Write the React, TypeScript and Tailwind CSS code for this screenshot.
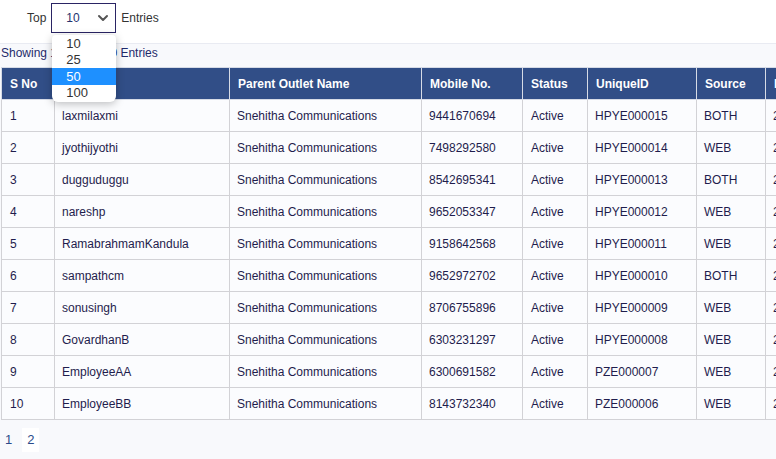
import React from "react";

const rows = [
  ["1", "laxmilaxmi", "9441670694", "HPYE000015", "BOTH"],
  ["2", "jyothijyothi", "7498292580", "HPYE000014", "WEB"],
  ["3", "dugguduggu", "8542695341", "HPYE000013", "BOTH"],
  ["4", "nareshp", "9652053347", "HPYE000012", "WEB"],
  ["5", "RamabrahmamKandula", "9158642568", "HPYE000011", "WEB"],
  ["6", "sampathcm", "9652972702", "HPYE000010", "BOTH"],
  ["7", "sonusingh", "8706755896", "HPYE000009", "WEB"],
  ["8", "GovardhanB", "6303231297", "HPYE000008", "WEB"],
  ["9", "EmployeeAA", "6300691582", "PZE000007", "WEB"],
  ["10", "EmployeeBB", "8143732340", "PZE000006", "WEB"],
];

const widths = [53, 175, 192, 101, 65, 109, 69, 120];
const headers = ["S No", "Name", "Parent Outlet Name", "Mobile No.", "Status", "UniqueID", "Source", "Date"];

export default function App() {
  return (
    <div className="w-[776px] h-[459px] bg-[#f8f9fc] overflow-hidden relative font-['Liberation_Sans',Arial,sans-serif] text-[12px] text-[#1f1d4d]">
      <div className="h-[44px] bg-white border-b border-[#e9ebf2] flex items-start pt-[3px] pl-[27px]">
        <span className="text-[12px] text-[#333] leading-[30px]">Top</span>
        <div className="relative ml-[5px]">
          <div className="w-[65px] h-[30px] border border-[#2a2464] bg-white flex items-center justify-between pl-[14px] pr-[6px]">
            <span className="text-[12px] text-[#26336e]">10</span>
            <svg width="12" height="8" viewBox="0 0 12 8">
              <path d="M2 2 L6 6 L10 2" fill="none" stroke="#555" strokeWidth="2" strokeLinecap="round" strokeLinejoin="round" />
            </svg>
          </div>
          <div className="absolute left-[1px] top-[32px] w-[64px] bg-white rounded-b-[6px] rounded-t-[4px] shadow-[0_2px_8px_rgba(0,0,0,0.25)] z-10 py-[1px] text-[13px] text-[#333]">
            <div className="h-[16px] leading-[16px] pl-[14px]">10</div>
            <div className="h-[16px] leading-[16px] pl-[14px]">25</div>
            <div className="h-[17px] leading-[17px] pl-[14px] bg-[#1e90ff] text-white">50</div>
            <div className="h-[16px] leading-[16px] pl-[14px]">100</div>
          </div>
        </div>
        <span className="ml-[5px] text-[12px] text-[#333] leading-[30px]">Entries</span>
      </div>
      <div className="h-[23px] leading-[17px] pl-[1px] pt-[1px] text-[#1f2a6b]">Showing 1 to 10 of 20 Entries</div>
      <div className="ml-[1px] overflow-hidden">
        <table className="table-fixed border-collapse w-[884px]">
          <colgroup>
            {widths.map((w, i) => (
              <col key={i} style={{ width: w }} />
            ))}
          </colgroup>
          <thead>
            <tr className="bg-[#314e87] h-[32px]">
              {headers.map((h) => (
                <th key={h} className="text-left text-white font-bold text-[12px] pl-[8px] border border-[#d6dbe6] whitespace-nowrap">
                  {h}
                </th>
              ))}
            </tr>
          </thead>
          <tbody>
            {rows.map((r) => (
              <tr key={r[0]} className="h-[32px] bg-[#fbfcfe]">
                <td className="pl-[8px] border border-[#d2d2d6]">{r[0]}</td>
                <td className="pl-[7px] border border-[#d2d2d6]">{r[1]}</td>
                <td className="pl-[7px] border border-[#d2d2d6]">Snehitha Communications</td>
                <td className="pl-[7px] border border-[#d2d2d6]">{r[2]}</td>
                <td className="pl-[8px] border border-[#d2d2d6]">Active</td>
                <td className="pl-[7px] border border-[#d2d2d6]">{r[3]}</td>
                <td className="pl-[7px] border border-[#d2d2d6]">{r[4]}</td>
                <td className="pl-[7px] border border-[#d2d2d6] whitespace-nowrap">2023-06-1{r[0].length}</td>
              </tr>
            ))}
          </tbody>
        </table>
      </div>
      <div className="flex items-center mt-[8px] pl-[3px] text-[13px] text-[#2a4a8a]">
        <span className="px-[2px] h-[24px] leading-[24px]">1</span>
        <span className="ml-[8px] px-[5px] h-[24px] leading-[24px] bg-white">2</span>
      </div>
    </div>
  );
}
